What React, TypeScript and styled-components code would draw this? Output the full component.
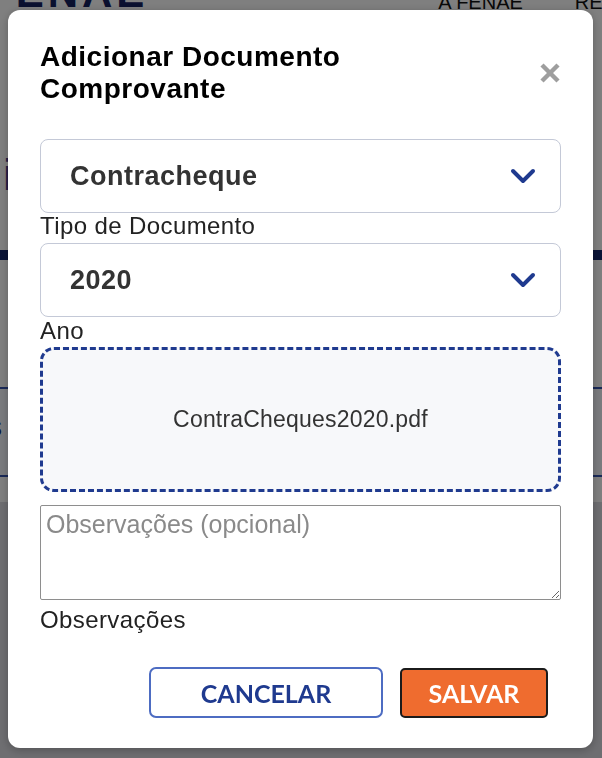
import * as React from 'react';
import styled, { createGlobalStyle } from 'styled-components';

const colors = {
	navy: '#1f3a8f',
	text: '#222222',
	select: '#333333',
	border: '#c4c9d7',
	orange: '#ef6c2f',
	placeholder: '#8a8a8a',
};

const GlobalStyle = createGlobalStyle`
	html, body {
		margin: 0;
		padding: 0;
		background: #ffffff;
		font-family: 'Liberation Sans', Arial, sans-serif;
	}
	* {
		box-sizing: border-box;
	}
`;

/* page behind the dialog */

const Page = styled.div`
	width: 602px;
	height: 758px;
	overflow: hidden;
	display: flex;
	flex-direction: column;
	background: #ffffff;
`;

const TopBar = styled.header`
	height: 10px;
	padding-bottom: 2px;
	display: flex;
	align-items: flex-end;
	overflow: hidden;
	color: #14205e;
	font-weight: 700;
`;

const Logo = styled.span`
	font-size: 42px;
	line-height: 0.72;
	margin-left: -14px;
	letter-spacing: 4px;
`;

const NavItem = styled.span<{ $ml: number }>`
	margin-left: ${p => p.$ml}px;
	font-size: 20px;
	line-height: 0.6;
	font-weight: 400;
	color: #111;
	white-space: nowrap;
`;

const Hero = styled.section`
	height: 240px;
	padding-top: 140px;
	padding-left: 3px;
	color: #4a3d8f;
	font-size: 44px;
	line-height: 50px;
`;

const NavyBar = styled.div`
	height: 10px;
	background: #14286e;
`;

const Gap = styled.div<{ $h: number }>`
	height: ${p => p.$h}px;
	background: #ffffff;
`;

const Band = styled.div`
	height: 90px;
	border-top: 2px solid #3453b0;
	border-bottom: 2px solid #3453b0;
	background: #f4f7fd;
	color: #14286e;
	font-size: 28px;
	padding-top: 22px;
	margin-left: -12px;
`;

const LowerArea = styled.div`
	flex: 1;
	background: #dcdce2;
`;

const Overlay = styled.div`
	position: fixed;
	inset: 0;
	background: rgba(0, 0, 0, 0.5);
`;

/* dialog */

const Modal = styled.div`
	position: fixed;
	top: 10px;
	left: 8px;
	width: 585px;
	height: 738px;
	background: #ffffff;
	border-radius: 12px;
	box-shadow: 0 2px 8px rgba(0, 0, 0, 0.25);
	padding: 31px 32px 0 32px;
	display: flex;
	flex-direction: column;
`;

const Header = styled.div`
	display: flex;
	align-items: center;
	justify-content: space-between;
`;

const Title = styled.h2`
	margin: 0;
	font-size: 28px;
	line-height: 32px;
	font-weight: 700;
	letter-spacing: 0.5px;
	color: #000;
`;

const CloseButton = styled.button`
	width: 24px;
	height: 22px;
	padding: 0;
	margin-right: -1px;
	border: none;
	background: none;
	display: flex;
	align-items: center;
	justify-content: center;
	cursor: pointer;
`;

const SelectBox = styled.div<{ $mt: number }>`
	margin-top: ${p => p.$mt}px;
	height: 74px;
	border: 1.5px solid ${colors.border};
	border-radius: 8px;
	padding: 0 24px 0 29px;
	display: flex;
	align-items: center;
	justify-content: space-between;
	cursor: pointer;
`;

const SelectValue = styled.span`
	font-size: 27px;
	font-weight: 700;
	letter-spacing: 0.5px;
	color: ${colors.select};
`;

const Label = styled.label<{ $mt: number }>`
	display: block;
	margin-top: ${p => p.$mt}px;
	font-size: 24px;
	line-height: 24px;
	letter-spacing: 0.4px;
	color: ${colors.text};
`;

const DropZone = styled.div`
	margin-top: 4px;
	height: 145px;
	border: 3px dashed ${colors.navy};
	border-radius: 14px;
	background: #f7f8fa;
	display: flex;
	align-items: center;
	justify-content: center;
	font-size: 23px;
	letter-spacing: 0.2px;
	color: #333;
`;

const Notes = styled.textarea`
	margin-top: 13px;
	height: 95px;
	width: 100%;
	border: 1.5px solid #8e8e8e;
	border-radius: 2px;
	padding: 4px 5px;
	font-family: 'Liberation Sans', Arial, sans-serif;
	font-size: 25px;
	color: ${colors.text};
	display: block;

	&::placeholder {
		color: ${colors.placeholder};
	}
`;

const Actions = styled.div`
	margin-top: 35px;
	padding-right: 13px;
	display: flex;
	justify-content: flex-end;
	align-items: center;
	gap: 17px;
`;

const Button = styled.button<{ $primary?: boolean }>`
	height: ${p => (p.$primary ? 50 : 51)}px;
	width: ${p => (p.$primary ? 148 : 234)}px;
	border-radius: ${p => (p.$primary ? 5 : 7)}px;
	border: ${p => (p.$primary ? '2.5px solid #1b1b1b' : '2px solid #4d6cc2')};
	background: ${p => (p.$primary ? colors.orange : '#ffffff')};
	color: ${p => (p.$primary ? '#ffffff' : colors.navy)};
	font-family: Lato, 'Liberation Sans', sans-serif;
	font-weight: 700;
	font-size: 25px;
	cursor: pointer;
`;

const Chevron = () => (
	<svg width="26" height="16" viewBox="0 0 26 16">
		<polyline
			points="3,3 13,13 23,3"
			fill="none"
			stroke={colors.navy}
			strokeWidth="4"
			strokeLinecap="round"
			strokeLinejoin="round"
		/>
	</svg>
);

const CloseIcon = () => (
	<svg width="22" height="20" viewBox="0 0 22 20">
		<line x1="3" y1="2" x2="19" y2="18" stroke="#9e9e9e" strokeWidth="4.5" />
		<line x1="19" y1="2" x2="3" y2="18" stroke="#9e9e9e" strokeWidth="4.5" />
	</svg>
);

const App: React.FunctionComponent = () => {
	return (
		<>
			<GlobalStyle />
			<Page>
				<TopBar>
					<Logo>FENAE</Logo>
					<NavItem $ml={290}>A FENAE</NavItem>
					<NavItem $ml={52}>REP</NavItem>
				</TopBar>
				<Hero>i</Hero>
				<NavyBar />
				<Gap $h={127} />
				<Band>s</Band>
				<Gap $h={25} />
				<LowerArea />
			</Page>
			<Overlay />
			<Modal role="dialog" aria-labelledby="modal-title">
				<Header>
					<Title id="modal-title">
						Adicionar Documento
						<br />
						Comprovante
					</Title>
					<CloseButton aria-label="Fechar">
						<CloseIcon />
					</CloseButton>
				</Header>

				<SelectBox $mt={34}>
					<SelectValue>Contracheque</SelectValue>
					<Chevron />
				</SelectBox>
				<Label $mt={1}>Tipo de Documento</Label>

				<SelectBox $mt={5}>
					<SelectValue>2020</SelectValue>
					<Chevron />
				</SelectBox>
				<Label $mt={2}>Ano</Label>

				<DropZone>ContraCheques2020.pdf</DropZone>

				<Notes placeholder="Observações (opcional)" />
				<Label $mt={8}>Observações</Label>

				<Actions>
					<Button>CANCELAR</Button>
					<Button $primary>SALVAR</Button>
				</Actions>
			</Modal>
		</>
	);
};

export default App;
